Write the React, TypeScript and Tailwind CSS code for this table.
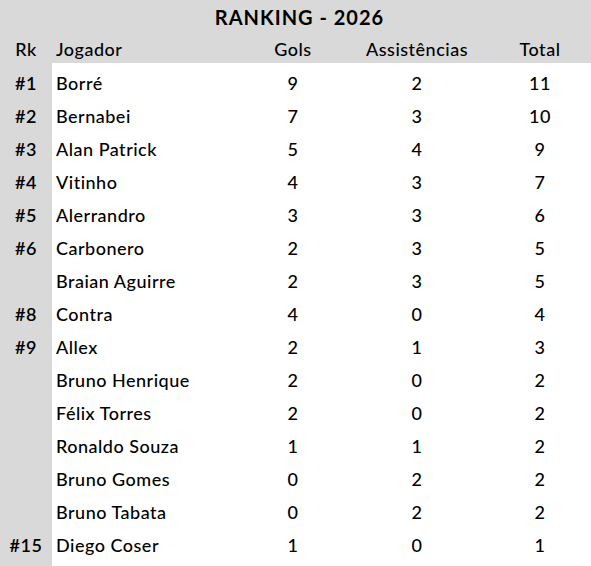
const rows = [
	{ rk: '#1', name: 'Borré', gols: 9, ast: 2, total: 11 },
	{ rk: '#2', name: 'Bernabei', gols: 7, ast: 3, total: 10 },
	{ rk: '#3', name: 'Alan Patrick', gols: 5, ast: 4, total: 9 },
	{ rk: '#4', name: 'Vitinho', gols: 4, ast: 3, total: 7 },
	{ rk: '#5', name: 'Alerrandro', gols: 3, ast: 3, total: 6 },
	{ rk: '#6', name: 'Carbonero', gols: 2, ast: 3, total: 5 },
	{ rk: '', name: 'Braian Aguirre', gols: 2, ast: 3, total: 5 },
	{ rk: '#8', name: 'Contra', gols: 4, ast: 0, total: 4 },
	{ rk: '#9', name: 'Allex', gols: 2, ast: 1, total: 3 },
	{ rk: '', name: 'Bruno Henrique', gols: 2, ast: 0, total: 2 },
	{ rk: '', name: 'Félix Torres', gols: 2, ast: 0, total: 2 },
	{ rk: '', name: 'Ronaldo Souza', gols: 1, ast: 1, total: 2 },
	{ rk: '', name: 'Bruno Gomes', gols: 0, ast: 2, total: 2 },
	{ rk: '', name: 'Bruno Tabata', gols: 0, ast: 2, total: 2 },
	{ rk: '#15', name: 'Diego Coser', gols: 1, ast: 0, total: 1 },
];

const cols = 'grid grid-cols-[52px_189px_104px_144px_102px] items-center';

export default function App() {
	return (
		<main className="flex h-[566px] w-[591px] flex-col overflow-hidden bg-[#d9d9d9] font-['Lato',sans-serif] text-[18px] font-medium tracking-[0.5px] text-black">
			<div className="flex h-[33px] items-center justify-center pl-[8px] pt-[1px] text-[20px] font-bold tracking-[1px]">
				RANKING - 2026
			</div>
			<div className={`${cols} h-[30px] pt-[3px]`}>
				<div className="text-center">Rk</div>
				<div className="pl-1">Jogador</div>
				<div className="text-center">Gols</div>
				<div className="text-center">Assistências</div>
				<div className="text-center">Total</div>
			</div>
			<div className="flex-1 bg-[linear-gradient(to_right,#d9d9d9_52px,#ffffff_52px)]">
				{rows.map((r) => (
					<div key={r.name} className={`${cols} h-[33px] pt-[7px]`}>
						<div className="text-center font-semibold">{r.rk}</div>
						<div className="pl-1">{r.name}</div>
						<div className="text-center">{r.gols}</div>
						<div className="text-center">{r.ast}</div>
						<div className="text-center">{r.total}</div>
					</div>
				))}
			</div>
		</main>
	);
}
